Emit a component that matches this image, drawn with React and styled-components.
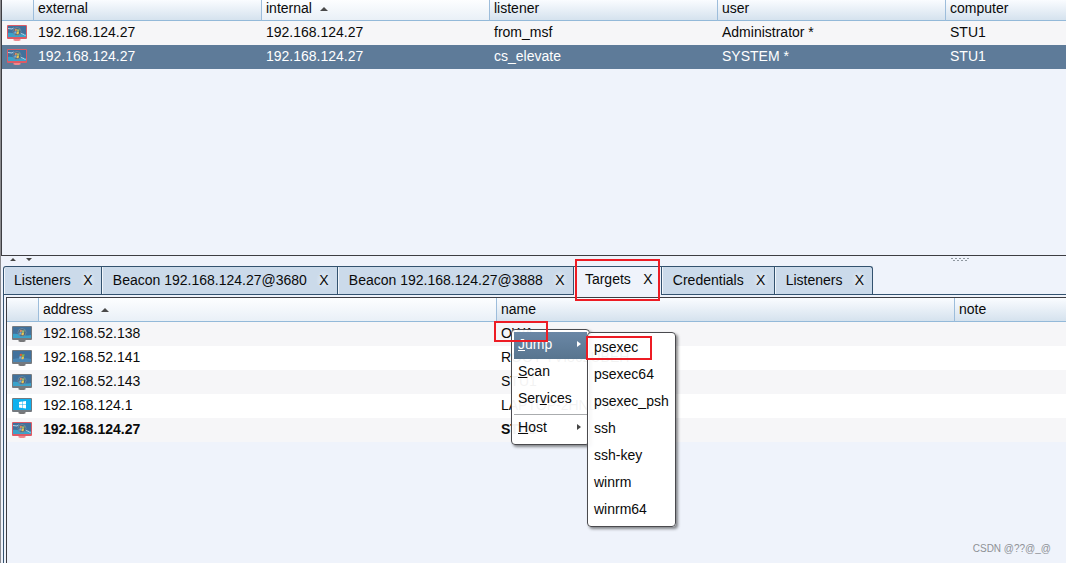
import React, { useState } from "react";
import styled, { createGlobalStyle, css } from "styled-components";

const SESSIONS = [
  { external: "192.168.124.27", internal: "192.168.124.27", listener: "from_msf", user: "Administrator *", computer: "STU1" },
  { external: "192.168.124.27", internal: "192.168.124.27", listener: "cs_elevate", user: "SYSTEM *", computer: "STU1" },
];

const TARGETS = [
  { os: "vista", address: "192.168.52.138", name: "OWA" },
  { os: "xp", address: "192.168.52.141", name: "ROOT-TVI862UBEH" },
  { os: "vista", address: "192.168.52.143", name: "STU1" },
  { os: "win10", address: "192.168.124.1", name: "LAPTOP-2HNLHLAT" },
  { os: "hacked", address: "192.168.124.27", name: "STU1", owned: true },
];

const TABS = [
  "Listeners",
  "Beacon 192.168.124.27@3680",
  "Beacon 192.168.124.27@3888",
  "Targets",
  "Credentials",
  "Listeners",
];

const JUMPS = ["psexec", "psexec64", "psexec_psh", "ssh", "ssh-key", "winrm", "winrm64"];

const HostIcon = ({ os, label }) => {
  const hacked = os === "hacked";
  const orb = os === "vista" || hacked;
  return (
    <IconSvg viewBox="0 0 20 16" role="img" aria-label={label || os}>
      <path d="M7 13h6v1l1 1-2 1H8l-2-1 1-1z" fill={hacked ? "#f0868d" : "#77787a"} />
      <rect x="0" y="0" width="20" height="14" rx="1" fill={hacked ? "#dc5a66" : "#747a80"} />
      <rect x="1" y="1" width="18" height="11" fill={os === "win10" ? "#0fb0ee" : "#41719c"} />
      {orb && <path d="M1 8c5-1 9 3 18 1v3H1z" fill="#3aa2ca" />}
      {os === "xp" && <path d="M1 9q9-2 18 0v3H1z" fill="#4a86b4" />}
      {os === "win10" && (
        <path d="M7 4l3-.5v3H7zM10.500 3.400l3.500-.5v3.600h-3.500zM7 7h3v3l-3-.5zM10.500 7H14v3.600l-3.500-.5z" fill="#fff" />
      )}
      {orb && <circle cx="10" cy="6.500" r="4" fill="#47657e" stroke="#7d9db4" strokeWidth="0.600" />}
      {os !== "win10" && (
        <>
          <path d="M8 4q1-.7 2 0l-.4 2.300q-.9-.6-2 0z" fill={orb ? "#d98a66" : "#e5602d"} />
          <path d="M10.300 4.100q1 .6 2.300 0l-.5 2.300q-1 .5-2.200 0z" fill={orb ? "#9dbd72" : "#87b944"} />
          <path d="M7.400 6.500q1.100-.6 2.100 0l-.4 2.200q-.9-.6-2 0z" fill="#74aede" />
          <path d="M9.800 6.600q1.100.6 2.300 0l-.5 2.300q-1 .5-2.200 0z" fill="#f0c551" />
        </>
      )}
      {hacked && (
        <path
          d="M1 3.500l4 .5 1.500-1M14 8.500l3 1 1.500 1.500"
          stroke="#c4dcea"
          strokeWidth="0.900"
          fill="none"
        />
      )}
    </IconSvg>
  );
};

const SortArrow = () => (
  <ArrowSvg viewBox="0 0 8 4" aria-hidden="true">
    <path d="M0 4L4 0l4 4z" fill="#4a4a4a" />
  </ArrowSvg>
);

const SessionTable = () => (
  <Table>
    <colgroup>
      <IconCol />
      <SessionCol />
      <SessionCol />
      <SessionCol />
      <SessionCol />
      <col />
    </colgroup>
    <thead>
      <tr>
        <Th $short aria-label="type" />
        <Th $short>external</Th>
        <Th $short $sorted>
          internal
          <SortArrow />
        </Th>
        <Th $short>listener</Th>
        <Th $short>user</Th>
        <Th $short>computer</Th>
      </tr>
    </thead>
    <tbody>
      {SESSIONS.map((item, i) => (
        <Row key={item.listener} $selected={i === 1}>
          <IconCell>
            <HostIcon os="hacked" />
          </IconCell>
          <td>{item.external}</td>
          <td>{item.internal}</td>
          <td>{item.listener}</td>
          <td>{item.user}</td>
          <td>{item.computer}</td>
        </Row>
      ))}
    </tbody>
  </Table>
);

const TargetTable = () => (
  <Table>
    <colgroup>
      <IconCol />
      <TargetCol />
      <TargetCol />
      <col />
    </colgroup>
    <thead>
      <tr>
        <Th aria-label="os" />
        <Th $sorted>
          address
          <SortArrow />
        </Th>
        <Th>name</Th>
        <Th>note</Th>
      </tr>
    </thead>
    <tbody>
      {TARGETS.map((item) => (
        <Row key={item.address} $owned={item.owned}>
          <IconCell>
            <HostIcon os={item.os} />
          </IconCell>
          <td>{item.address}</td>
          <td>{item.name}</td>
          <td />
        </Row>
      ))}
    </tbody>
  </Table>
);

const ContextMenu = () => (
  <>
    <Menu $x={511} $y={329} $w={79}>
      <MenuItem type="button" $active>
        <span>
          <u>J</u>ump
        </span>
        <Caret $light />
      </MenuItem>
      <MenuItem type="button">
        <span>
          <u>S</u>can
        </span>
      </MenuItem>
      <MenuItem type="button">
        <span>
          Ser<u>v</u>ices
        </span>
      </MenuItem>
      <MenuLine />
      <MenuItem type="button">
        <span>
          <u>H</u>ost
        </span>
        <Caret />
      </MenuItem>
    </Menu>
    <Menu $x={587} $y={332} $w={89}>
      {JUMPS.map((name) => (
        <MenuItem type="button" key={name}>
          {name}
        </MenuItem>
      ))}
    </Menu>
  </>
);

const App = () => {
  const [selectTab, setSelectTab] = useState(3);

  return (
    <>
      <GlobalStyle />
      <Window>
        <TopPane>
          <SessionTable />
        </TopPane>
        <Divider>
          <DividerArrows viewBox="0 0 24 4" aria-hidden="true">
            <path d="M0 3L3 0l3 3zM16 0h6l-3 3z" fill="#444" />
          </DividerArrows>
          <Grip viewBox="0 0 18 4" aria-hidden="true">
            <path d="M0 .5h18" stroke="#8f979f" strokeDasharray="2 2" />
            <path d="M2 2.500h16" stroke="#8f979f" strokeDasharray="2 2" />
          </Grip>
        </Divider>
        <BottomPane>
          <TabBar>
            {TABS.map((name, i) => (
              <Tab key={i} $on={selectTab === i}>
                <button type="button" onClick={() => setSelectTab(i)}>
                  {name}
                </button>
                <TabClose type="button" aria-label={`Close ${name}`}>
                  X
                </TabClose>
              </Tab>
            ))}
          </TabBar>
          <TabBody>
            <TargetPanel>
              <TargetTable />
            </TargetPanel>
          </TabBody>
        </BottomPane>
        <ContextMenu />
        <Mark $x={575} $y={259} $w={85} $h={42} />
        <Mark $x={494} $y={321} $w={54} $h={21} />
        <Mark $x={586} $y={336} $w={66} $h={24} />
        <Credit>CSDN @??@_@</Credit>
      </Window>
    </>
  );
};

const GlobalStyle = createGlobalStyle`
  * {
    box-sizing: border-box;
  }
  body {
    margin: 0;
    background: #eff3fb;
    color: #0a0a0a;
    font: 14px/24px "Liberation Sans", Arial, sans-serif;
  }
  button {
    padding: 0;
    border: 0;
    background: none;
    color: inherit;
    font: inherit;
    text-align: left;
    white-space: nowrap;
  }
`;

const Window = styled.main`
  position: relative;
  display: flex;
  flex-direction: column;
  min-height: 100vh;
  overflow: hidden;
  box-shadow: inset 1px 0 #8b8b8f;
`;

const TopPane = styled.section`
  height: 256px;
  margin-left: 1px;
  border-left: 1px solid #3d3d42;
  border-bottom: 1px solid #3d3d42;
`;

const Table = styled.table`
  width: 100%;
  table-layout: fixed;
  border-collapse: separate;
  border-spacing: 0;

  td {
    height: 24px;
    padding: 0 4px 2px;
    line-height: 22px;
    white-space: nowrap;
  }
`;

const IconCol = styled.col`
  width: 32px;
`;

const SessionCol = styled.col`
  width: 228px;
`;

const TargetCol = styled.col`
  width: 458px;
`;

const Th = styled.th`
  height: ${(props) => (props.$short ? 21 : 24)}px;
  padding: 0 4px ${(props) => (props.$short ? 4 : 1)}px;
  border-right: 1px solid #9dbddb;
  border-bottom: 1px solid #93b9d9;
  background: ${(props) =>
    props.$sorted
      ? "linear-gradient(#fdfeff, #e9f0f7)"
      : "linear-gradient(#fafcff, #d5e2ee)"};
  font-weight: normal;
  line-height: 16px;
  text-align: left;

  &:last-child {
    border-right: 0;
  }
`;

const Row = styled.tr`
  background: #fff;

  &:nth-child(odd) {
    background: #f6f6f8;
  }
  ${(props) =>
    props.$selected &&
    css`
      && {
        background: #5e7b99;
        color: #fff;
      }
    `}
  ${(props) =>
    props.$owned &&
    css`
      font-weight: bold;
    `}
`;

const IconCell = styled.td`
  && {
    padding: 0 5px;
    line-height: 0;
  }
`;

const IconSvg = styled.svg`
  width: 20px;
  height: 16px;
`;

const ArrowSvg = styled.svg`
  width: 8px;
  height: 4px;
  margin-left: 8px;
  vertical-align: middle;
`;

const Divider = styled.div`
  display: flex;
  align-items: flex-start;
  height: 10px;
  padding: 2px 97px 0 10px;
`;

const DividerArrows = styled.svg`
  width: 24px;
  height: 4px;
`;

const Grip = styled.svg`
  width: 18px;
  height: 4px;
  margin-left: auto;
`;

const BottomPane = styled.section`
  display: flex;
  flex: 1;
  flex-direction: column;
  margin-left: 3px;
`;

const TabBar = styled.div`
  display: flex;
  height: 29px;
  border-bottom: 1px solid #33526f;
`;

const Tab = styled.div`
  display: flex;
  align-items: center;
  gap: 9px;
  height: ${(props) => (props.$on ? 29 : 28)}px;
  padding: 0 5px ${(props) => (props.$on ? 4 : 1)}px 11px;
  border: 1px solid #33526f;
  border-width: 1px 1px 0 0;
  background: ${(props) => (props.$on ? "#eff3fb" : "#cbdaea")};
  box-shadow: inset 1px 0 #f2f6fb;

  &:first-child {
    padding-left: 10px;
    border-left-width: 1px;
    border-top-left-radius: 3px;
  }
  &:last-child {
    border-top-right-radius: 3px;
  }
`;

const TabClose = styled.button`
  && {
    width: 16px;
    height: 20px;
    background: radial-gradient(#eef3f8aa, transparent 70%);
    line-height: 20px;
    text-align: center;
  }
`;

const TabBody = styled.div`
  display: flex;
  flex: 1;
  padding: 2px 0 0 2px;
  border-left: 1px solid #33526f;
`;

const TargetPanel = styled.div`
  flex: 1;
  min-width: 0;
  border-top: 1px solid #3d3d42;
  border-left: 1px solid #3d3d42;
`;

const Menu = styled.div`
  position: absolute;
  top: ${(props) => props.$y}px;
  left: ${(props) => props.$x}px;
  width: ${(props) => props.$w}px;
  padding: 2px;
  border: 1px solid #4a4a4e;
  border-radius: 4px;
  background: rgba(255, 255, 255, 0.95);
  box-shadow: 2px 2px 3px rgba(0, 0, 0, 0.45);
`;

const MenuItem = styled.button`
  && {
    display: flex;
    align-items: center;
    justify-content: space-between;
    width: 100%;
    height: 27px;
    padding: 0 6px 3px 4px;
    line-height: 20px;
  }
  ${(props) =>
    props.$active &&
    css`
      && {
        background: linear-gradient(#6a87a6, #58758f);
        color: #fff;
      }
    `}
`;

const Caret = styled.i`
  border: 3px solid transparent;
  border-right-width: 0;
  border-left: 4px solid ${(props) => (props.$light ? "#fff" : "#444")};
`;

const MenuLine = styled.div`
  height: 1px;
  margin-top: 1px;
  background: #aaacae;
`;

const Mark = styled.div`
  position: absolute;
  top: ${(props) => props.$y}px;
  left: ${(props) => props.$x}px;
  width: ${(props) => props.$w}px;
  height: ${(props) => props.$h}px;
  border: 2px solid #ed1c24;
  pointer-events: none;
`;

const Credit = styled.small`
  position: absolute;
  right: 15px;
  bottom: 6px;
  color: #8e9196;
  font-size: 10px;
  line-height: 16px;
`;

export default App;
